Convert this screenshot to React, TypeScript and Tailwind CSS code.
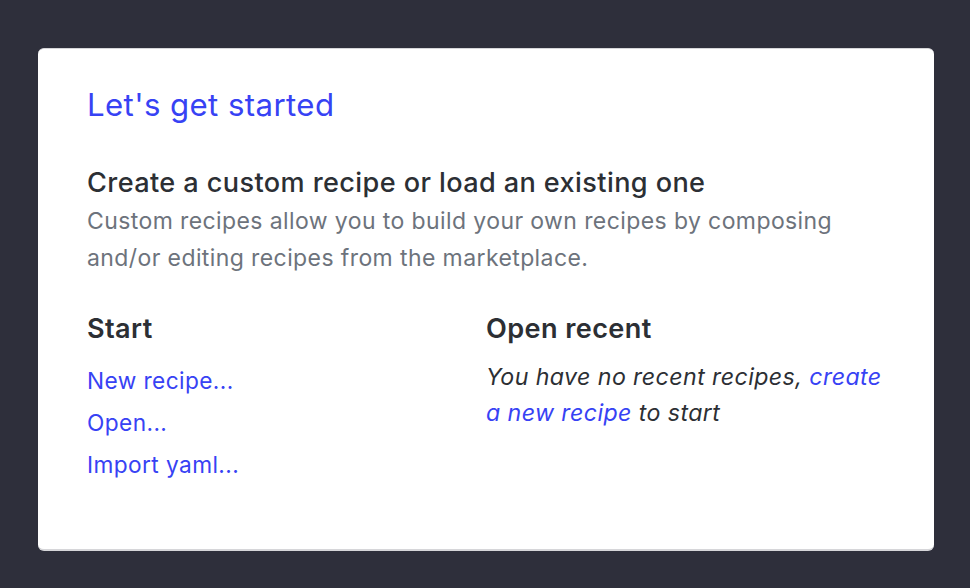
import React from "react";

export default function App() {
  return (
    <div
      className="w-[970px] h-[588px] bg-[#2e2f3b] pt-[48px] pl-[38px]"
      style={{ fontFamily: "Inter, 'Noto Sans', sans-serif" }}
    >
      <div className="w-[896px] h-[503px] bg-white rounded-[6px] border-t border-b-2 border-[#d6d6d9] px-[49px] pt-[36px] tracking-[0.025em]">
        <h1 className="text-[31.2px] leading-[40px] text-[#3742f4] font-normal">Let's get started</h1>
        <h2 className="mt-[40px] text-[27.1px] leading-[36px] font-medium text-[#2c2f34]">
          Create a custom recipe or load an existing one
        </h2>
        <p className="mt-[2px] text-[23px] leading-[37px] text-[#6d737c]">
          Custom recipes allow you to build your own recipes by composing and/or editing recipes from the marketplace.
        </p>
        <div className="grid grid-cols-2 mt-[34px]">
          <div>
            <h3 className="text-[27.1px] leading-[36px] font-semibold text-[#2c2f34]">Start</h3>
            <div className="flex flex-col items-start mt-[18px] gap-[10px]">
              <a className="text-[22.7px] leading-[32px] text-[#3742f4]">New recipe...</a>
              <a className="text-[22.7px] leading-[32px] text-[#3742f4]">Open...</a>
              <a className="text-[22.7px] leading-[32px] text-[#3742f4]">Import yaml...</a>
            </div>
          </div>
          <div>
            <h3 className="text-[27.1px] leading-[36px] font-semibold text-[#2c2f34]">Open recent</h3>
            <p className="mt-[12px] text-[23.2px] leading-[36px] italic text-[#2c2f34]">
              You have no recent recipes, <a className="text-[#3742f4]">create a new recipe</a> to start
            </p>
          </div>
        </div>
      </div>
    </div>
  );
}
